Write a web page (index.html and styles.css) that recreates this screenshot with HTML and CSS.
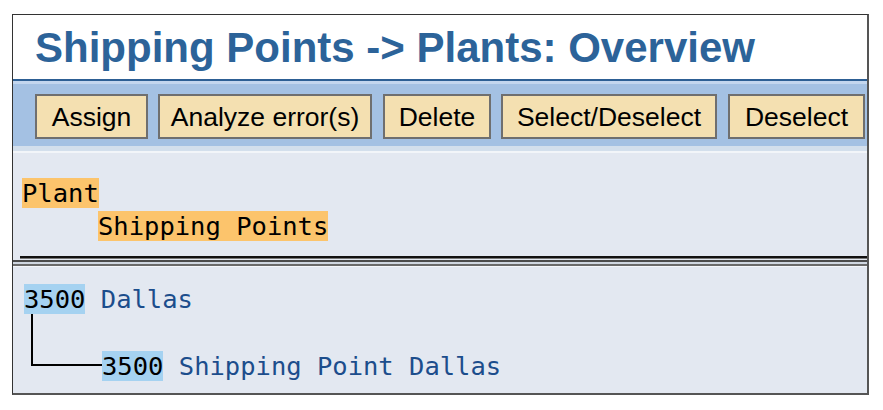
FILE: index.html
```html
<!DOCTYPE html>
<html>
<head>
<meta charset="utf-8">
<link rel="stylesheet" href="styles.css">
</head>
<body>
<div class="frame">
  <div class="title">Shipping Points -&gt; Plants: Overview</div>
  <div class="toolbar">
    <button class="btn btn-assign">Assign</button>
    <button class="btn btn-analyze">Analyze error(s)</button>
    <button class="btn btn-delete">Delete</button>
    <button class="btn btn-select">Select/Deselect</button>
    <button class="btn btn-deselect">Deselect</button>
  </div>
  <div class="header">
    <div class="hrow"><span class="hl-orange">Plant</span></div>
    <div class="hrow indent"><span class="hl-orange">Shipping Points</span></div>
    <div class="hline"></div>
  </div>
  <div class="divider"></div>
  <div class="tree">
    <div class="node"><span class="key">3500</span> <span class="txt">Dallas</span></div>
    <div class="child">
      <div class="connector"></div>
      <div class="node sub"><span class="key">3500</span> <span class="txt">Shipping Point Dallas</span></div>
    </div>
  </div>
</div>
</body>
</html>
```

FILE: styles.css
```css
* { box-sizing: border-box; }
html, body { margin: 0; padding: 0; background: #ffffff; }
body { width: 883px; height: 410px; overflow: hidden; }

.frame {
  margin: 14px 0 0 12px;
  width: 857px;
  height: 381px;
  border-top: 1px solid #333333;
  border-left: 1px solid #333333;
  border-right: 2px solid #555555;
  border-bottom: 2px solid #555555;
  display: flex;
  flex-direction: column;
  background: #e3e8f1;
}

.title {
  height: 66px;
  background: #ffffff;
  border-bottom: 2px solid #2d5f94;
  padding: 10px 0 0 22px;
  font-family: "Liberation Sans", Arial, sans-serif;
  font-weight: bold;
  font-size: 42px;
  line-height: 46px;
  color: #2c6399;
  white-space: nowrap;
}

.toolbar {
  height: 70px;
  background: #a4c1e3;
  border-top: 3px solid #c3d6ee;
  border-bottom: 5px solid #d3dfec;
  padding: 10px 0 0 22px;
  display: flex;
}

.btn {
  height: 45px;
  margin: 0;
  padding: 0;
  background: #f4e0b1;
  border: 2px solid #6f6f6f;
  font-family: "Liberation Sans", Arial, sans-serif;
  font-size: 26.5px;
  line-height: 40px;
  color: #000000;
  white-space: nowrap;
  text-align: center;
}
.btn-assign { width: 113px; }
.btn-analyze { width: 214px; margin-left: 10px; }
.btn-delete { width: 108px; margin-left: 11px; }
.btn-select { width: 216px; margin-left: 10px; }
.btn-deselect { width: 137px; margin-left: 11px; }

.header {
  height: 109px;
  border-top: 2px solid #f2f5f9;
  padding: 25px 0 0 9px;
  font-family: "DejaVu Sans Mono", monospace;
  font-size: 25.5px;
  color: #000000;
}
.hrow { height: 33px; line-height: 30px; }
.hrow.indent { padding-left: 76px; }
.hl-orange { display: inline-block; height: 30px; line-height: 30px; background: #fcc46c; }
.hline { margin: 12px 0 0 -2px; height: 3px; background: #111111; border-bottom: 1px solid #777777; }

.divider {
  height: 6px;
  border-top: 2px solid #4a4a4a;
  border-bottom: 2px solid #6a6a6a;
  background: #cfd6e0;
}

.tree {
  flex: 1;
  padding: 17px 0 0 11px;
  font-family: "DejaVu Sans Mono", monospace;
  font-size: 25.5px;
  color: #1c4d8c;
  border-top: 1px solid #f4f6fa;
}
.node { height: 30px; line-height: 30px; white-space: pre; }
.key { display: inline-block; height: 30px; background: #a5d2f1; color: #000000; }
.child { display: flex; align-items: flex-start; }
.connector {
  margin-left: 7px;
  width: 71px;
  height: 52px;
  border-left: 2px solid #000000;
  border-bottom: 2px solid #000000;
}
.node.sub { margin-top: 37px; }
```
